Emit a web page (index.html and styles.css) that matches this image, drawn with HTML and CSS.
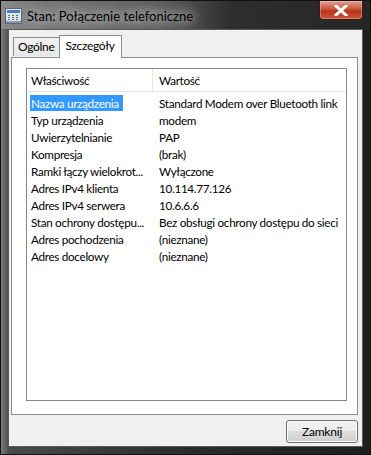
FILE: index.html
```html
<!DOCTYPE html>
<html lang="pl">
<head>
  <meta charset="UTF-8">
  <title>Stan: Połączenie telefoniczne</title>
  <link rel="stylesheet" href="styles.css">
</head>
<body>
  <div class="okno">
    <div class="pasek">
      <svg class="ikona" width="17" height="16" viewBox="0 0 17 16">
        <rect x="0.5" y="0.5" width="16" height="15" fill="#dfe6ee" stroke="#56657a"/>
        <rect x="2" y="2" width="13" height="3" fill="#4a7bb7"/>
        <g fill="#5a6b80">
          <rect x="3" y="7" width="2" height="1"/><rect x="7" y="7" width="2" height="1"/><rect x="11" y="7" width="2" height="1"/>
          <rect x="3" y="9" width="2" height="1"/><rect x="7" y="9" width="2" height="1"/><rect x="11" y="9" width="2" height="1"/>
          <rect x="3" y="11" width="2" height="1"/><rect x="7" y="11" width="2" height="1"/><rect x="11" y="11" width="2" height="1"/>
        </g>
        <rect x="1" y="13" width="15" height="2" fill="#8a97a8"/>
      </svg>
      <span class="tytul">Stan: Połączenie telefoniczne</span>
      <div class="zamknij-x">
        <svg width="14" height="11" viewBox="0 0 14 11">
          <path d="M2 1 L12 10 M12 1 L2 10" stroke="#fff" stroke-width="3" stroke-linecap="square"/>
        </svg>
      </div>
    </div>

    <div class="klient">
      <div class="zakladki">
        <div class="zakladka">Ogólne</div>
        <div class="zakladka aktywna">Szczegóły</div>
      </div>

      <div class="panel">
        <div class="lista">
          <div class="naglowek">
            <div class="kol1">Właściwość</div>
            <div class="kol2">Wartość</div>
          </div>
          <div class="wiersze">
            <div class="wiersz"><div class="kol1"><span class="zaznaczony">Nazwa urządzenia</span></div><div class="kol2">Standard Modem over Bluetooth link</div></div>
            <div class="wiersz"><div class="kol1">Typ urządzenia</div><div class="kol2">modem</div></div>
            <div class="wiersz"><div class="kol1">Uwierzytelnianie</div><div class="kol2">PAP</div></div>
            <div class="wiersz"><div class="kol1">Kompresja</div><div class="kol2">(brak)</div></div>
            <div class="wiersz"><div class="kol1">Ramki łączy wielokrot...</div><div class="kol2">Wyłączone</div></div>
            <div class="wiersz"><div class="kol1">Adres IPv4 klienta</div><div class="kol2">10.114.77.126</div></div>
            <div class="wiersz"><div class="kol1">Adres IPv4 serwera</div><div class="kol2">10.6.6.6</div></div>
            <div class="wiersz"><div class="kol1">Stan ochrony dostępu...</div><div class="kol2">Bez obsługi ochrony dostępu do sieci</div></div>
            <div class="wiersz"><div class="kol1">Adres pochodzenia</div><div class="kol2">(nieznane)</div></div>
            <div class="wiersz"><div class="kol1">Adres docelowy</div><div class="kol2">(nieznane)</div></div>
          </div>
        </div>
      </div>

      <div class="stopka">
        <button class="przycisk">Zamknij</button>
      </div>
    </div>
  </div>
</body>
</html>
```

FILE: styles.css
```css
:root {
  --klient: #f0f0f0;
  --obwodka: #898c95;
  --zaznaczenie: #3399ff;
  --tekst: #000;
}

* {
  box-sizing: border-box;
}

body {
  margin: 0;
  font-family: 'Lato', 'Noto Sans', sans-serif;
  font-size: 12px;
  letter-spacing: -0.3px;
  color: var(--tekst);
  background: #1a1a1a;
}

.okno {
  width: 371px;
  height: 455px;
  display: flex;
  flex-direction: column;
  background: linear-gradient(90deg, #7a7a7a 0, #4a4a4a 8px, #2c2c2c 50%, #1f1f1f 100%);
  border: 1px solid #111;
}

.pasek {
  height: 28px;
  display: flex;
  align-items: center;
  padding-left: 4px;
  background: linear-gradient(90deg, #8c8c8c 0, #7a7a7a 30px, #5e5e5e 160px, #2e2e2e 230px, #262626 100%);
}

.ikona {
  flex: none;
  margin-top: 1px;
}

.tytul {
  margin-left: 5px;
  margin-top: 1px;
  font-size: 13px;
  letter-spacing: 0;
  color: #000;
  text-shadow: 0 0 8px #cfcfcf, 0 0 14px #bdbdbd, 0 0 18px #a0a0a0;
}

.zamknij-x {
  align-self: flex-start;
  margin-left: auto;
  margin-right: 7px;
  width: 44px;
  height: 19px;
  display: flex;
  align-items: center;
  justify-content: center;
  border: 1px solid #3b1a14;
  border-top: none;
  border-radius: 0 0 4px 4px;
  background: linear-gradient(#e2a393 0, #c9553c 45%, #b7341a 55%, #c9553c 100%);
  box-shadow: inset 0 0 0 1px rgba(255, 220, 200, 0.35);
}

.klient {
  flex: 1;
  margin: 0 7px 7px 7px;
  background: var(--klient);
  border: 1px solid #5a5a5a;
  display: flex;
  flex-direction: column;
  padding: 5px 4px 0 2px;
}

.zakladki {
  display: flex;
  align-items: flex-end;
  padding-left: 2px;
  height: 22px;
  position: relative;
  z-index: 1;
}

.zakladka {
  height: 19px;
  padding: 0 5px 0 4px;
  border: 1px solid var(--obwodka);
  border-bottom: none;
  border-right: none;
  background: linear-gradient(#f3f3f3, #e6e6e6);
  line-height: 18px;
  margin-bottom: 1px;
}

.zakladka.aktywna {
  height: 23px;
  margin-bottom: -1px;
  background: #fff;
  border-right: 1px solid var(--obwodka);
  padding: 0 6px 0 5px;
  line-height: 19px;
}

.panel {
  height: 358px;
  background: #fff;
  border: 1px solid var(--obwodka);
  padding: 10px 10px 13px 14px;
}

.lista {
  height: 100%;
  border: 1px solid #828790;
  background: #fff;
  font-size: 11.7px;
}

.naglowek {
  display: flex;
  height: 23px;
  align-items: center;
  border-bottom: 1px solid #e5e5e5;
}

.naglowek .kol1 {
  border-right: 1px solid #e5e5e5;
  height: 100%;
  display: flex;
  align-items: center;
}

.wiersze {
  padding-top: 2px;
}

.wiersz {
  display: flex;
  height: 17px;
  align-items: center;
}

.kol1 {
  flex: none;
  width: 126px;
  padding-left: 4px;
  white-space: nowrap;
  overflow: hidden;
}

.kol2 {
  padding-left: 6px;
  white-space: nowrap;
}

.zaznaczony {
  display: inline-block;
  background: var(--zaznaczenie);
  color: #fff;
  padding: 0 4px 0 1px;
  margin-left: -1px;
  line-height: 16px;
}

.stopka {
  display: flex;
  justify-content: flex-end;
  padding-top: 5px;
}

.przycisk {
  width: 72px;
  height: 23px;
  font-family: inherit;
  font-size: 12px;
  letter-spacing: -0.2px;
  border: 1px solid #707070;
  border-radius: 3px;
  background: linear-gradient(#f2f2f2 0, #ebebeb 50%, #dddddd 50%, #cfcfcf 100%);
  box-shadow: inset 0 0 0 1px #fcfcfc;
  padding: 0;
}
```
